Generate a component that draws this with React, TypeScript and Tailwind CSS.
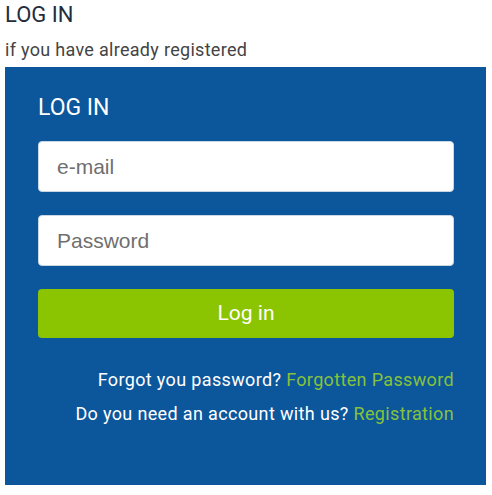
export default function App() {
  return (
    <div className="w-[492px] h-[495px] bg-white px-[5px] pt-[1px] font-['Roboto',sans-serif]">
      <h1 className="text-[22px] leading-[26px] text-[#1f2d3d] mt-[1px]">LOG IN</h1>
      <p className="text-[18px] leading-[21px] tracking-[0.3px] text-[#444] mt-[11px]">if you have already registered</p>
      <div className="mt-[7px] w-[481px] h-[418px] bg-[#0c569b] pl-[33px] pr-[32px]">
        <div className="pt-[27px]">
          <h2 className="text-[23px] leading-[28px] text-white">LOG IN</h2>
          <div className="mt-[19px] flex flex-col gap-[23px]">
            <input
              type="text"
              placeholder="e-mail"
              className="h-[51px] w-full rounded-[4px] border border-[#c9d6e4] bg-white px-[18px] text-[21px] font-['Liberation_Sans',sans-serif] text-[#555] placeholder:text-[#6f6f6f] outline-none"
            />
            <input
              type="password"
              placeholder="Password"
              className="h-[51px] w-full rounded-[4px] border border-[#c9d6e4] bg-white px-[18px] text-[21px] font-['Liberation_Sans',sans-serif] text-[#555] placeholder:text-[#6f6f6f] outline-none"
            />
            <button className="h-[49px] w-full rounded-[4px] bg-[#8bc400] text-[21px] text-white">
              Log in
            </button>
          </div>
          <div className="mt-[31px] text-right text-[18px] leading-[21px] tracking-[0.35px] text-white">
            <p>
              Forgot you password? <a className="text-[#86c23c]">Forgotten Password</a>
            </p>
            <p className="mt-[13px]">
              Do you need an account with us? <a className="text-[#86c23c]">Registration</a>
            </p>
          </div>
        </div>
      </div>
    </div>
  );
}
